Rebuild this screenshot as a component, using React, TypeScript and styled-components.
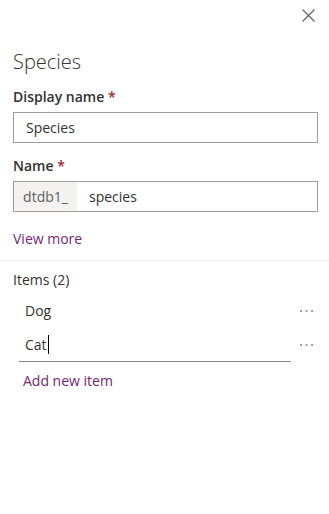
import { createGlobalStyle, styled } from "styled-components";

const GlobalStyle = createGlobalStyle`
  html, body {
    margin: 0;
    padding: 0;
    background: #ffffff;
  }
  body {
    font-family: "Open Sans", "Noto Sans", "Liberation Sans", sans-serif;
    color: #323130;
  }
`;

const items = [
  { label: "Dog", editing: false },
  { label: "Cat", editing: true },
];

const App = () => {
  return (
    <>
      <GlobalStyle />
      <Panel>
        <Header>
          <CloseButton aria-label="Close">
            <svg width="13" height="13" viewBox="0 0 13 13">
              <path d="M0.5 0.5 L12.5 12.5 M12.5 0.5 L0.5 12.5" stroke="#605e5c" strokeWidth="1.1" />
            </svg>
          </CloseButton>
        </Header>

        <Body>
          <Title>Species</Title>

          <Label>
            Display name <Required>*</Required>
          </Label>
          <TextBox>
            <TextValue>Species</TextValue>
          </TextBox>

          <Label $top={13}>
            Name <Required>*</Required>
          </Label>
          <TextBox>
            <Prefix>dtdb1_</Prefix>
            <TextValue $left={12}>species</TextValue>
          </TextBox>

          <Link $top={17}>View more</Link>
        </Body>

        <Divider />

        <Body>
          <SectionTitle>Items (2)</SectionTitle>
          <ItemList>
            {items.map((item) => (
              <ItemRow key={item.label}>
                <ItemField $editing={item.editing}>
                  {item.label}
                  {item.editing && <Caret />}
                </ItemField>
                <MoreButton aria-label="More options">
                  <svg width="13" height="3" viewBox="0 0 13 3">
                    <rect x="0" y="0" width="2" height="2" fill="#a19f9d" />
                    <rect x="5.5" y="0" width="2" height="2" fill="#a19f9d" />
                    <rect x="11" y="0" width="2" height="2" fill="#a19f9d" />
                  </svg>
                </MoreButton>
              </ItemRow>
            ))}
          </ItemList>
          <Link $top={9} $left={10}>Add new item</Link>
        </Body>
      </Panel>
    </>
  );
};

const Panel = styled.div`
  width: 329px;
  height: 514px;
  background: #ffffff;
  display: flex;
  flex-direction: column;
`;

const Header = styled.div`
  display: flex;
  justify-content: flex-end;
  padding: 9px 14px 0 0;
  height: 13px;
`;

const CloseButton = styled.div`
  width: 13px;
  height: 13px;
  display: flex;
`;

const Body = styled.div`
  display: flex;
  flex-direction: column;
  padding: 0 11px 0 13px;
`;

const Title = styled.div`
  margin-top: 26px;
  font-size: 20px;
  font-weight: 300;
  line-height: 28px;
  color: #323130;
`;

const Label = styled.div<{ $top?: number }>`
  margin-top: ${(p) => p.$top ?? 11}px;
  font-size: 14px;
  font-weight: 600;
  line-height: 20px;
  color: #323130;
`;

const Required = styled.span`
  color: #a4262c;
`;

const TextBox = styled.div`
  margin-top: 5px;
  height: 31px;
  box-sizing: border-box;
  border: 1px solid #a19f9d;
  display: flex;
  align-items: stretch;
  font-size: 14px;
`;

const Prefix = styled.div`
  width: 63px;
  background: #f3f2f1;
  color: #605e5c;
  display: flex;
  align-items: center;
  justify-content: center;
  line-height: 29px;
`;

const TextValue = styled.div<{ $left?: number }>`
  padding-left: ${(p) => p.$left ?? 12}px;
  line-height: 29px;
  color: #323130;
`;

const Link = styled.div<{ $top?: number; $left?: number }>`
  margin-top: ${(p) => p.$top ?? 0}px;
  margin-left: ${(p) => p.$left ?? 0}px;
  font-size: 14px;
  line-height: 20px;
  color: #742774;
`;

const Divider = styled.div`
  margin-top: 11px;
  height: 1px;
  background: #edebe9;
`;

const SectionTitle = styled.div`
  margin-top: 9px;
  font-size: 14px;
  line-height: 20px;
  color: #323130;
`;

const ItemList = styled.div`
  margin-top: 4px;
  margin-left: 6px;
  display: flex;
  flex-direction: column;
`;

const ItemRow = styled.div`
  display: flex;
  align-items: center;
  height: 34px;
`;

const ItemField = styled.div<{ $editing: boolean }>`
  flex: 0 0 272px;
  height: 34px;
  box-sizing: border-box;
  padding-left: 6px;
  display: flex;
  align-items: center;
  font-size: 14px;
  color: #323130;
  border-bottom: 1px solid ${(p) => (p.$editing ? "#8a8886" : "transparent")};
`;

const Caret = styled.span`
  display: inline-block;
  width: 1px;
  height: 19px;
  margin-left: 1px;
  background: #000000;
`;

const MoreButton = styled.div`
  flex: 1;
  display: flex;
  justify-content: flex-end;
  padding-right: 5px;
`;

export default App;
